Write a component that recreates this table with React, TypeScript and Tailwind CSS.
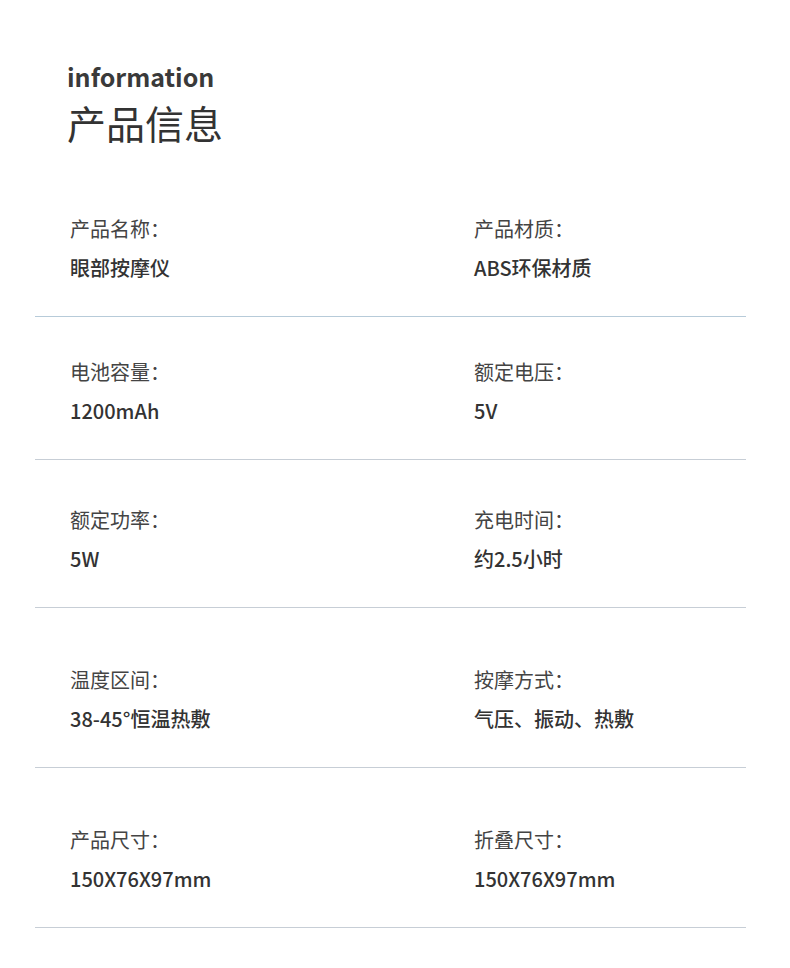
const rows = [
  { pt: 'pt-[0px]', items: [['产品名称：', '眼部按摩仪'], ['产品材质：', 'ABS环保材质']], line: 'border-[#b7cbd9]' },
  { pt: 'pt-[43px]', items: [['电池容量：', '1200mAh'], ['额定电压：', '5V']], line: 'border-[#c7ced6]' },
  { pt: 'pt-[48px]', items: [['额定功率：', '5W'], ['充电时间：', '约2.5小时']], line: 'border-[#c7ced6]' },
  { pt: 'pt-[60px]', items: [['温度区间：', '38-45°恒温热敷'], ['按摩方式：', '气压、振动、热敷']], line: 'border-[#c7ced6]' },
  { pt: 'pt-[60px]', items: [['产品尺寸：', '150X76X97mm'], ['折叠尺寸：', '150X76X97mm']], line: 'border-[#c7ced6]' },
];

export default function App() {
  return (
    <div className="w-[790px] h-[968px] bg-white font-['Noto_Sans_CJK_SC','Noto_Sans',sans-serif] text-[#333]">
      <div className="pl-[67px] pt-[59px]">
        <div className="text-[25px] leading-[34px] font-bold text-[#3a3a3a]">information</div>
        <div className="text-[39px] leading-[52px] font-normal text-[#333] mt-[3px]">产品信息</div>
      </div>
      <div className="mx-[35px] w-[711px] mt-[69px]">
        {rows.map((r, i) => (
          <div key={i} className={`${r.pt} pb-[36px] border-b ${r.line}`}>
            <div className="grid grid-cols-[404px_1fr] pl-[35px]">
              {r.items.map(([label, value]) => (
                <div key={label}>
                  <div className="text-[20px] leading-[24px] text-[#444]">{label}</div>
                  <div className="mt-[15px] text-[20px] leading-[24px] font-medium text-[#333]">{value}</div>
                </div>
              ))}
            </div>
          </div>
        ))}
      </div>
    </div>
  );
}
